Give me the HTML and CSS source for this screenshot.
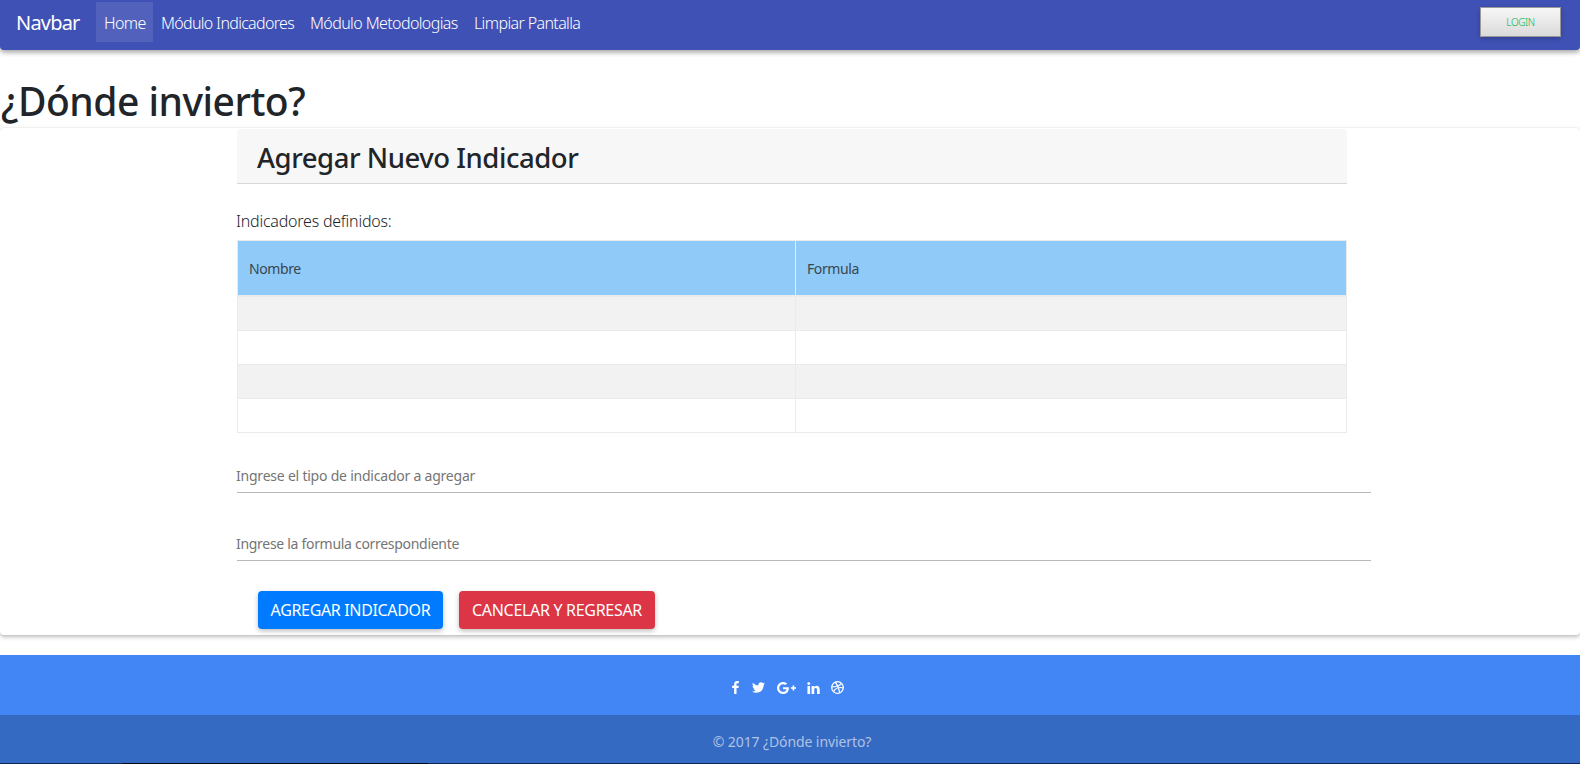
FILE: index.html
```html
<!DOCTYPE html>
<html lang="es">
<head>
<meta charset="utf-8">
<title>¿Dónde invierto?</title>
<link rel="stylesheet" href="styles.css">
</head>
<body>
<nav class="navbar">
  <a class="brand"><span class="t-brand">Navbar</span></a>
  <div class="links">
    <a class="link active"><span class="t-home">Home</span></a>
    <a class="link"><span class="t-ind">Módulo Indicadores</span></a>
    <a class="link"><span class="t-met">Módulo Metodologias</span></a>
    <a class="link"><span class="t-lim">Limpiar Pantalla</span></a>
  </div>
  <button class="login"><span class="t-login">LOGIN</span></button>
</nav>
<h1 class="page-title"><span class="t-title">¿Dónde invierto?</span></h1>
<main class="card">
  <div class="container">
    <h3 class="card-header"><span class="t-head">Agregar Nuevo Indicador</span></h3>
    <p class="caption"><span class="t-cap">Indicadores definidos:</span></p>
    <table class="table">
      <colgroup><col class="col-name"><col></colgroup>
      <thead><tr><th><span class="t-nom">Nombre</span></th><th><span class="t-for">Formula</span></th></tr></thead>
      <tbody>
        <tr class="first"><td></td><td></td></tr>
        <tr><td></td><td></td></tr>
        <tr><td></td><td></td></tr>
        <tr><td></td><td></td></tr>
      </tbody>
    </table>
    <div class="field"><span class="t-f1">Ingrese el tipo de indicador a agregar</span></div>
    <div class="field second"><span class="t-f2">Ingrese la formula correspondiente</span></div>
    <div class="actions">
      <button class="btn primary"><span class="t-b1">AGREGAR INDICADOR</span></button>
      <button class="btn danger"><span class="t-b2">CANCELAR Y REGRESAR</span></button>
    </div>
  </div>
</main>
<footer class="footer">
  <div class="social">
    <svg class="ico-f" viewBox="95 128 864 1664"><path d="M959 140v264h-157q-86 0-116 36t-30 108v189h293l-39 296h-254v759h-306v-759h-255v-296h255v-218q0-186 104-288.500t277-102.500q147 0 228 12z"/></svg>
    <svg class="ico-t" viewBox="44 256 1576 1280"><path d="M1620 408q-67 98-162 167 1 14 1 42 0 130-38 259.500t-115.500 248.500-184.500 210.500-258 146-323 54.500q-271 0-496-145 35 4 78 4 225 0 401-138-105-2-188-64.500t-114-159.500q33 5 61 5 43 0 85-11-112-23-185.500-111.500t-73.500-205.500v-4q68 38 146 41-66-44-105-115t-39-154q0-88 44-163 121 149 294.500 238.500t371.500 99.500q-8-38-8-74 0-134 94.500-228.500t228.500-94.500q140 0 236 102 109-21 205-78-37 115-142 178 93-10 186-50z"/></svg>
    <svg class="ico-g" viewBox="0 181 2304 1430"><path d="M1437 913q0 208-87 370.500t-248 254-369 91.500q-149 0-285-58t-234-156-156-234-58-285 58-285 156-234 234-156 285-58q286 0 491 192l-199 191q-117-113-292-113-123 0-227.500 62t-165.500 168.500-61 232.500 61 232.500 165.500 168.500 227.500 62q83 0 152.500-23t114.500-57.500 78.500-78.500 49-83 21.500-74h-416v-252h692q12 63 12 122zM2304 792v210h-209v209h-210v-209h-209v-210h209v-209h210v209z"/></svg>
    <svg class="ico-l" viewBox="0 128 1536 1488"><path d="M349 625v991h-330v-991h330zm21-306q1 73-50.500 122t-135.500 49h-2q-82 0-132-49t-50-122q0-74 51.500-122.500t134.500-48.500 133 48.500 51 122.500zm1166 729v568h-329v-530q0-105-40.500-164.500t-126.500-59.500q-63 0-105.500 34.500t-63.500 85.500q-11 30-11 81v553h-329q2-399 2-647t-1-296l-1-48h329v144h-2q20-32 41-56t56.500-52 87-43.500 114.500-15.500q171 0 275 113.500t104 332.500z"/></svg>
    <svg class="ico-d" viewBox="0 0 13 13"><g fill="none" stroke="#fff" stroke-width="1.3"><circle cx="6.500" cy="6.500" r="5.800"/><path d="M4.300 1C6.500 3.700 8 7 8.900 11.800M.7 5.900C4.500 5.900 8.300 5 10.600 2.300M2.500 10.700C4.200 7.200 8.300 5.800 12.300 7"/></g></svg>
  </div>
  <div class="copyright"><span class="t-copy">© 2017 ¿Dónde invierto?</span></div>
</footer>
<div class="edge"></div>
</body>
</html>
```
FILE: styles.css
```css
* { box-sizing: border-box; }
body {
  margin: 0;
  height: 764px;
  overflow: hidden;
  background: #fff;
  color: #212529;
  font-family: "Noto Sans", "Open Sans", sans-serif;
}
span { white-space: nowrap; }
.navbar {
  display: flex;
  align-items: flex-start;
  height: 50px;
  padding: 2px 19px 0 16px;
  background: #3f51b5;
  color: #fff;
  border-radius: 0 0 4px 4px;
  box-shadow: 0 2px 5px rgba(0,0,0,.26), 0 2px 6px rgba(0,0,0,.16);
}
.brand { width: 80px; font-size: 20px; line-height: 42px; letter-spacing: -.8px; }
.links { display: flex; }
.link { height: 40px; padding: 0 8px; font-size: 16px; font-weight: 300; line-height: 42px; white-space: nowrap; letter-spacing: -.62px; }
.link:nth-child(1) { width: 57px; }
.link:nth-child(2) { width: 149px; letter-spacing: -.68px; }
.link:nth-child(3) { width: 164px; letter-spacing: -.6px; }
.link.active { background: rgba(255,255,255,.1); }
.login {
  width: 81px;
  height: 30px;
  margin: 5px 0 0 auto;
  padding: 0;
  border: 1px solid #999;
  background: linear-gradient(#f7f7f7, #dadada);
  box-shadow: 0 2px 5px rgba(0,0,0,.2);
  color: #00b84a;
  font: 300 10px/29px "Noto Sans", sans-serif;
  letter-spacing: -.4px;
}
.page-title { margin: 0; height: 78px; padding: 25px 0 0 1px; font-size: 39px; font-weight: 500; line-height: 52px; letter-spacing: -.5px; }
.card {
  height: 507px;
  padding: 1px 233px 0 237px;
  border-radius: 4px;
  background: #fff;
  box-shadow: 0 2px 4px rgba(0,0,0,.26), 0 0 2px rgba(0,0,0,.1);
}
.card-header {
  height: 55px;
  margin: 0;
  padding-left: 20px;
  background: #f7f7f7;
  border-bottom: 1px solid #d8d8d8;
  border-radius: 4px 4px 0 0;
  font-size: 27.5px;
  font-weight: 500;
  line-height: 57px;
  letter-spacing: -.46px;
}
.caption { height: 56px; margin: 0; padding-top: 25px; font-size: 16px; font-weight: 300; line-height: 24px; letter-spacing: -.22px; }
.t-cap, .t-f1, .t-f2 { margin-left: -1px; }
.table { width: 1110px; border-collapse: collapse; table-layout: fixed; }
.col-name { width: 558px; }
.table th, .table td { border: 1px solid #e9ecef; padding: 0 11px; height: 34px; }
.table th { height: 55px; padding-top: 1px; background: #90caf9; text-align: left; font-size: 14px; font-weight: 400; color: #37474f; letter-spacing: -.4px; }
.table .first td { height: 35px; box-shadow: inset 0 1px #e9ecef; }
.table tbody tr:nth-child(odd) { background: #f2f2f2; }
.field {
  width: 1134px;
  height: 38px;
  margin-top: 22px;
  border-bottom: 1px solid #b8b8b8;
  color: #757575;
  font-size: 14px;
  line-height: 42px;
  letter-spacing: -.22px;
}
.field.second { margin-top: 30px; letter-spacing: -.3px; }
.actions { display: flex; gap: 16px; padding: 30px 0 0 21px; }
.btn {
  width: 185px;
  height: 38px;
  padding: 0;
  border: 0;
  border-radius: 4px;
  color: #fff;
  font: 400 16px/39px "Noto Sans", sans-serif;
  letter-spacing: -.34px;
  box-shadow: 0 2px 5px rgba(0,0,0,.26);
}
.primary { background: #007bff; }
.danger { width: 196px; background: #dc3545; letter-spacing: -.3px; }
.footer { margin-top: 20px; background: #4285f4; color: #fff; }
.social { display: flex; align-items: center; height: 60px; padding: 5px 0 0 732px; }
.social svg { fill: #fff; flex: none; }
.ico-f { width: 7px; height: 13px; }
.ico-t { width: 13px; height: 11px; margin-left: 13px; }
.ico-g { width: 19px; height: 12px; margin-left: 12px; }
.ico-l { width: 13px; height: 12px; margin-left: 11px; }
.ico-d { width: 13px; height: 13px; margin-left: 11px; }
.copyright { height: 48px; background: #356ac3; color: rgba(255,255,255,.6); text-align: center; padding-left: 4px; font-size: 14px; line-height: 53px; letter-spacing: -.1px; }
.edge { height: 1px; background: linear-gradient(90deg, #10275a 0 122px, #050a14 122px 428px, #10275a 428px); }
```
